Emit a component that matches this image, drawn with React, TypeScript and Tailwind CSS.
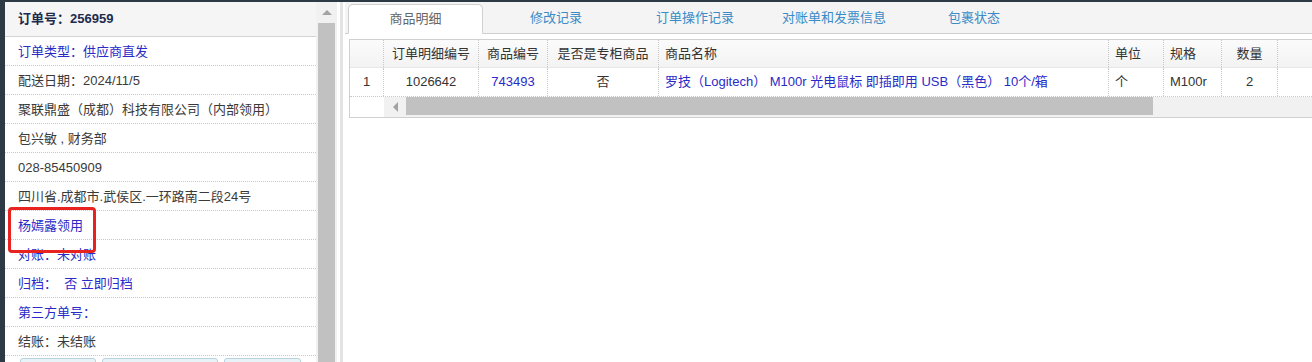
import React from "react";

const rows: { text: string; blue?: boolean }[] = [
  { text: "订单类型：供应商直发", blue: true },
  { text: "配送日期：2024/11/5" },
  { text: "聚联鼎盛（成都）科技有限公司（内部领用）" },
  { text: "包兴敏 , 财务部" },
  { text: "028-85450909" },
  { text: "四川省.成都市.武侯区.一环路南二段24号" },
  { text: "杨嫣露领用", blue: true },
  { text: "对账：未对账", blue: true },
  { text: "归档：  否 立即归档", blue: true },
  { text: "第三方单号：", blue: true },
  { text: "结账：未结账" },
];

const tabs = [
  { label: "修改记录", w: "w-[146px]" },
  { label: "订单操作记录", w: "w-[132px]" },
  { label: "对账单和发票信息", w: "w-[146px]" },
  { label: "包裹状态", w: "w-[134px]" },
];

const cols = [
  { title: "", w: "w-[34px]", val: "1", align: "justify-center" },
  { title: "订单明细编号", w: "w-[95px]", val: "1026642", align: "justify-center" },
  { title: "商品编号", w: "w-[69px]", val: "743493", align: "justify-center", blue: true },
  { title: "是否是专柜商品", w: "w-[111px]", val: "否", align: "justify-center" },
  {
    title: "商品名称",
    w: "w-[450px]",
    val: "罗技（Logitech） M100r 光电鼠标 即插即用 USB（黑色） 10个/箱",
    align: "justify-start pl-[6px]",
    blue: true,
    headLeft: true,
  },
  { title: "单位", w: "w-[55px]", val: "个", align: "justify-start pl-[6px]", headLeft: true },
  { title: "规格", w: "w-[58px]", val: "M100r", align: "justify-start pl-[6px]", headLeft: true },
  { title: "数量", w: "w-[56px]", val: "2", align: "justify-center" },
  { title: "", w: "w-[60px]", val: "", align: "justify-center" },
];

export default function App() {
  return (
    <div
      className="relative h-[362px] w-[1312px] overflow-hidden bg-white text-[13px] text-[#333]"
      style={{ fontFamily: '"Liberation Sans", "Noto Sans CJK SC", sans-serif' }}
    >
      <div className="h-[2px] w-full bg-[#2d3a45]" />
      <div className="flex h-[360px]">
        <div className="w-[5px] shrink-0 bg-[#2d3a45]" />

        {/* left info panel */}
        <div className="flex w-[311px] shrink-0 flex-col">
          <div className="flex h-[35px] shrink-0 items-center border-b border-[#d4d4d4] bg-[#f5f5f5] pl-[13px] font-bold text-[#1e2b4e]">
            订单号：256959
          </div>
          {rows.map((r, i) => (
            <div
              key={i}
              className={`flex h-[29px] shrink-0 items-center border-b border-dotted border-[#c8c8c8] pl-[13px] pt-px whitespace-pre ${
                r.blue ? "text-[#2a2ac8]" : "text-[#3a3a3a]"
              }`}
            >
              {r.text}
            </div>
          ))}
          <div className="flex gap-[6px] pl-[15px] pt-[2px]">
            <div className="h-[26px] w-[76px] rounded-[3px] border border-[#b7d3df] bg-[#e8f3f8]" />
            <div className="h-[26px] w-[116px] rounded-[3px] border border-[#b7d3df] bg-[#e8f3f8]" />
            <div className="h-[26px] w-[77px] rounded-[3px] border border-[#b7d3df] bg-[#e8f3f8]" />
          </div>
        </div>

        {/* vertical scrollbar */}
        <div className="flex w-[21px] shrink-0 flex-col items-center bg-[#f1f1f1]">
          <div className="flex h-[21px] w-full items-center justify-center">
            <div className="h-0 w-0 border-x-[5px] border-b-[5px] border-x-transparent border-b-[#a3a3a3]" />
          </div>
          <div className="w-[17px] flex-1 bg-[#c1c1c1]" />
        </div>

        {/* gutter */}
        <div className="flex w-[8px] shrink-0">
          <div className="w-[3px] bg-white" />
          <div className="w-[3px] bg-[#e4e4e4]" />
          <div className="w-[2px] bg-white" />
        </div>

        {/* right panel */}
        <div className="flex min-w-0 flex-1 flex-col">
          <div className="flex h-[32px] shrink-0 items-end border-b border-[#cfcfcf] bg-[#f4f4f4] pl-[3px]">
            <div className="-mb-px flex h-[30px] w-[135px] items-center justify-center rounded-t-[5px] border border-b-white border-[#cfcfcf] bg-white text-[#666]">
              商品明细
            </div>
            {tabs.map((t) => (
              <div key={t.label} className={`flex h-[30px] ${t.w} items-center justify-center text-[#3a8bc6]`}>
                {t.label}
              </div>
            ))}
          </div>

          <div className="pl-[4px] pt-[5px]">
            <div className="border-y border-l border-[#d0d0d0]">
              <div className="flex h-[28px] border-b border-[#e6e6e6] bg-gradient-to-b from-[#fbfbfb] to-[#f3f3f3]">
                {cols.map((c, i) => (
                  <div
                    key={i}
                    className={`flex ${c.w} shrink-0 items-center border-r border-dotted border-[#c8c8c8] whitespace-nowrap text-[#333] ${
                      c.headLeft ? "justify-start pl-[6px]" : "justify-center"
                    }`}
                  >
                    {c.title}
                  </div>
                ))}
              </div>
              <div className="flex h-[29px] border-b border-dotted border-[#c8c8c8]">
                {cols.map((c, i) => (
                  <div
                    key={i}
                    className={`flex ${c.w} shrink-0 items-center border-r border-dotted border-[#c8c8c8] whitespace-nowrap ${c.align} ${
                      c.blue ? "text-[#2a2ac8]" : "text-[#333]"
                    }`}
                  >
                    {c.val}
                  </div>
                ))}
              </div>
              <div className="flex h-[20px]">
                <div className="w-[34px] shrink-0 bg-white" />
                <div className="flex flex-1 bg-[#f1f1f1]">
                  <div className="flex w-[22px] items-center justify-center">
                    <div className="h-0 w-0 border-y-[5px] border-r-[5px] border-y-transparent border-r-[#a3a3a3]" />
                  </div>
                  <div className="mb-[2px] w-[747px] bg-[#c1c1c1]" />
                </div>
              </div>
            </div>
          </div>
        </div>
      </div>

      {/* highlight box */}
      <div className="absolute left-[8px] top-[207px] h-[46px] w-[88px] rounded-[4px] border-[3px] border-[#e8231f]" />
    </div>
  );
}
